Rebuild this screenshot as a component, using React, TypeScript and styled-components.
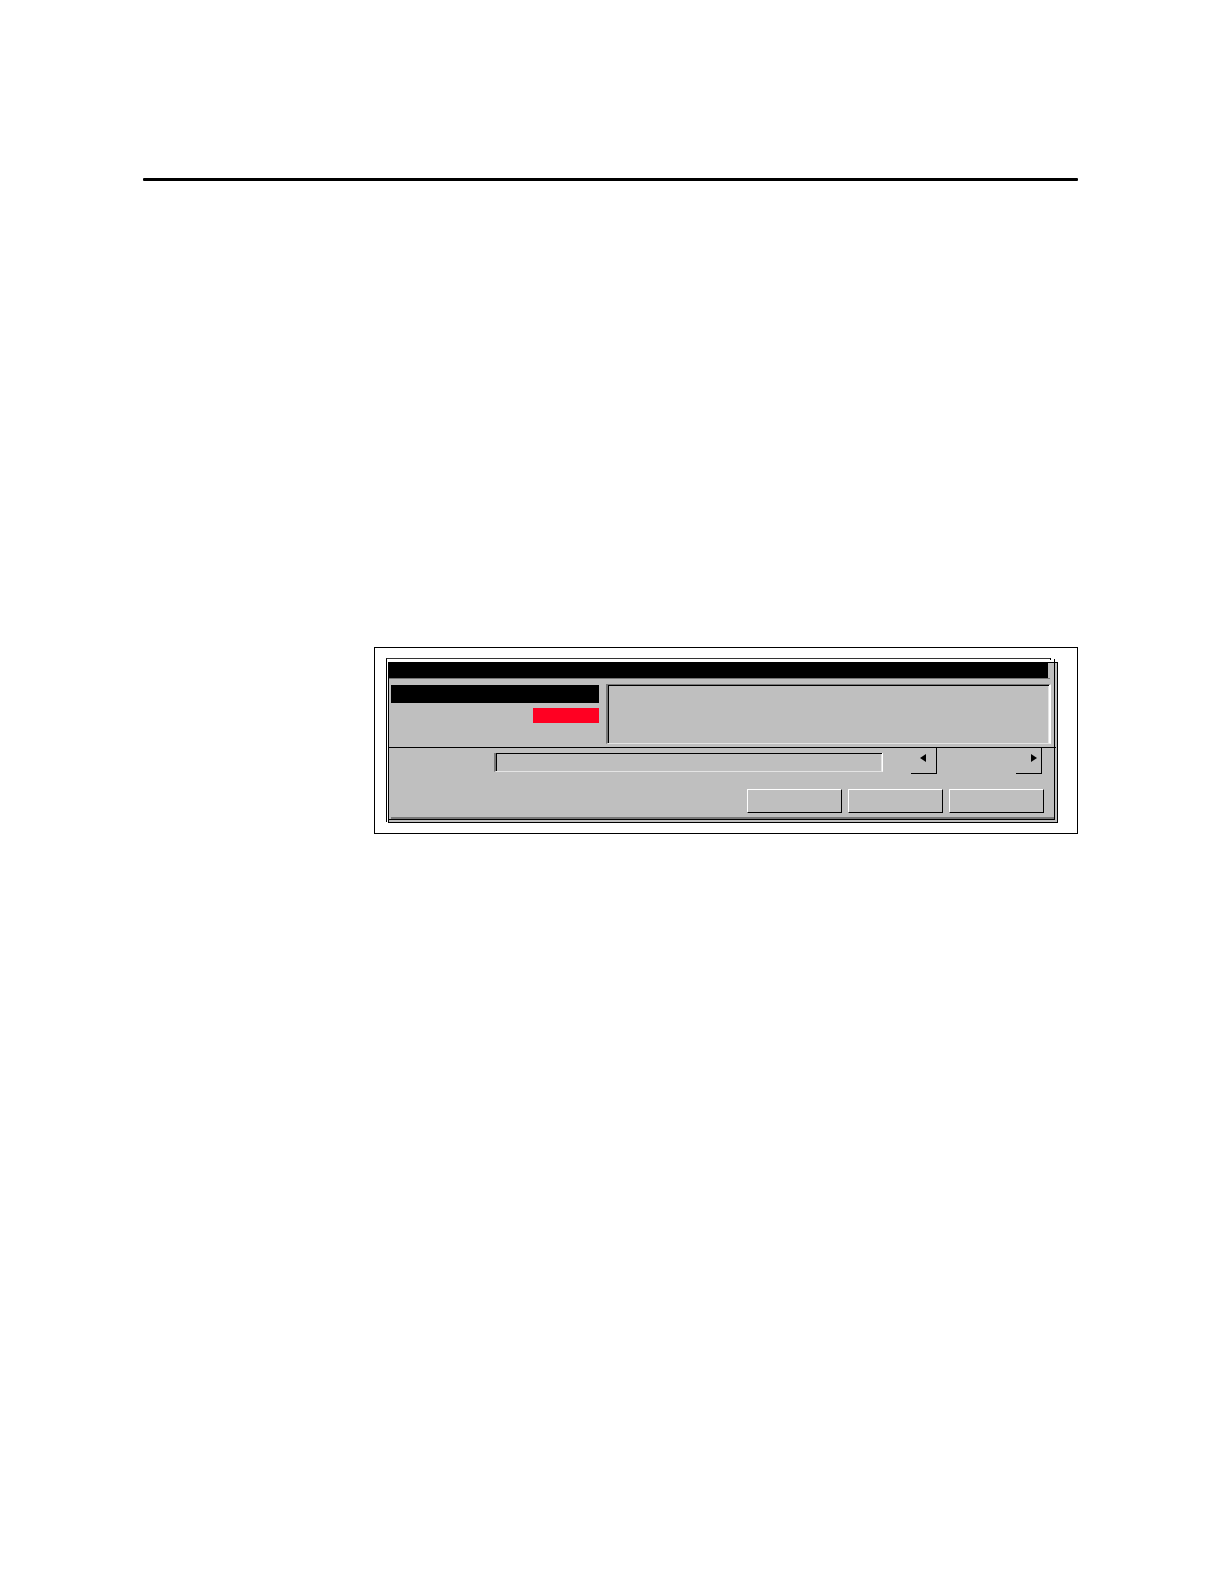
import { useState } from "react";
import styled, { createGlobalStyle } from "styled-components";

const colors = {
    face: "#bfbfbf",
    shadow: "#777777",
    light: "#e4e4e4",
    alarm: "#ff0022",
};

const actions = ["Action 1", "Action 2", "Action 3"];

export default function App() {
    const [value, setValue] = useState("");

    return (<>
        <GlobalStyle />
        <Page>
            <Rule />
            <Frame>
                <Panel>
                    <TitleBar><TitleFill /></TitleBar>
                    <StatusRow>
                        <StatusList>
                            <StatusName />
                            <StatusAlarm />
                        </StatusList>
                        <MessageBox aria-label="Messages" readOnly />
                    </StatusRow>
                    <InputRow>
                        <Field
                            type="text"
                            aria-label="Input"
                            value={value}
                            onChange={(e) => setValue(e.target.value)}
                        />
                        <ArrowButton type="button" aria-label="Previous" $inset={9}>
                            <svg width="6" height="8" viewBox="0 0 6 8"><path d="M6 0V8L0 4Z" /></svg>
                        </ArrowButton>
                        <ArrowGap />
                        <ArrowButton type="button" aria-label="Next" $inset={15}>
                            <svg width="6" height="8" viewBox="0 0 6 8"><path d="M0 0V8L6 4Z" /></svg>
                        </ArrowButton>
                    </InputRow>
                    <ButtonRow>
                        {actions.map((name) => <ActionButton key={name} type="button" aria-label={name} />)}
                    </ButtonRow>
                    <BottomShadow />
                    <BottomEdge />
                </Panel>
            </Frame>
        </Page>
    </>)
}


const GlobalStyle = createGlobalStyle`
  * {
    box-sizing: border-box;
  }
  body {
    margin: 0;
    background: #fff;
    font-family: "Liberation Sans", Arial, sans-serif;
    font-size: 12px;
  }
`;

const Page = styled.main`
  display: flex;
  flex-direction: column;
  padding: 178px 146px 100px 143px;
`;

const Rule = styled.hr`
  width: 100%;
  height: 3px;
  margin: 0 0 466px;
  border: 0;
  border-radius: 1px;
  background: #000;
`;

const Frame = styled.section`
  position: relative;
  margin-left: 231px;
  padding: 14px 19px 10px 13px;
  border: 1px solid #000;

  /* window outline, slightly up and left of the panel */
  &::before {
    content: "";
    position: absolute;
    top: 10px;
    right: 26px;
    bottom: 11px;
    left: 11px;
    border-top: 1px solid #333;
    border-left: 1px solid #000;
  }
  &::after {
    content: "";
    position: absolute;
    top: 10px;
    right: 26px;
    width: 1px;
    height: 2px;
    background: #000;
  }
`;

const Panel = styled.div`
  position: relative;
  display: flex;
  flex-direction: column;
  border: 1px solid #000;
  background: ${colors.face};

  &::after {
    content: "";
    position: absolute;
    top: -4px;
    right: 2px;
    bottom: 2px;
    width: 1px;
    background: #000;
  }
`;

const TitleBar = styled.header`
  margin-right: 7px;
  padding-right: 2px;
  border-bottom: 1px solid ${colors.shadow};
`;

const TitleFill = styled.div`
  height: 15px;
  background: #000;
`;

const StatusRow = styled.div`
  display: flex;
  gap: 7px;
  margin-right: 1px;
  padding: 5px 5px 3px 2px;
  border-bottom: 1px solid #000;
`;

const StatusList = styled.div`
  display: flex;
  flex-direction: column;
  gap: 5px;
  width: 208px;
  padding-top: 1px;
`;

const StatusName = styled.div`
  height: 18px;
  background: #000;
`;

const StatusAlarm = styled.div`
  align-self: flex-end;
  width: 66px;
  height: 15px;
  background: ${colors.alarm};
`;

const MessageBox = styled.textarea`
  flex: 1;
  min-width: 0;
  height: 60px;
  padding: 4px;
  border: solid;
  border-width: 1px 2px 1px 2px;
  border-color: ${colors.shadow} #fff ${colors.light} ${colors.shadow};
  border-radius: 0;
  outline: 0;
  resize: none;
  font: inherit;
  background: ${colors.face};
  box-shadow: inset 1px 1px 0 #000, inset -1px 0 0 ${colors.light};
`;

const InputRow = styled.div`
  display: flex;
  padding: 0 15px 0 105px;
`;

const Field = styled.input`
  flex: 1;
  min-width: 0;
  height: 19px;
  margin: 5px 28px 0 0;
  padding: 0 4px;
  border: solid;
  border-width: 0 1px 1px 2px;
  border-color: #000 #fff ${colors.light} ${colors.shadow};
  border-radius: 0;
  outline: 0;
  font: inherit;
  background: ${colors.face};
  box-shadow: inset 1px 1px 0 #000, inset -1px 0 0 ${colors.light};
`;

const ArrowButton = styled.button<{ $inset: number }>`
  display: flex;
  align-items: flex-start;
  justify-content: flex-start;
  width: 26px;
  height: 26px;
  padding: 6px 0 0 ${(props) => props.$inset}px;
  border: solid #000;
  border-width: 0 1px 1px 0;
  background: ${colors.face};
`;

const ArrowGap = styled.div`
  width: 79px;
`;

const ButtonRow = styled.div`
  display: flex;
  justify-content: flex-end;
  gap: 6px;
  padding: 15px 13px 4px;
`;

const ActionButton = styled.button`
  width: 95px;
  height: 24px;
  padding: 0;
  border: 1px solid;
  border-color: #fff #000 #000 #fff;
  background: ${colors.face};
`;

const BottomShadow = styled.div`
  height: 2px;
  margin: 0 3px 0 2px;
  background: ${colors.shadow};
`;

const BottomEdge = styled.div`
  height: 3px;
  margin-right: 2px;
  border-top: 1px solid #000;
`;
